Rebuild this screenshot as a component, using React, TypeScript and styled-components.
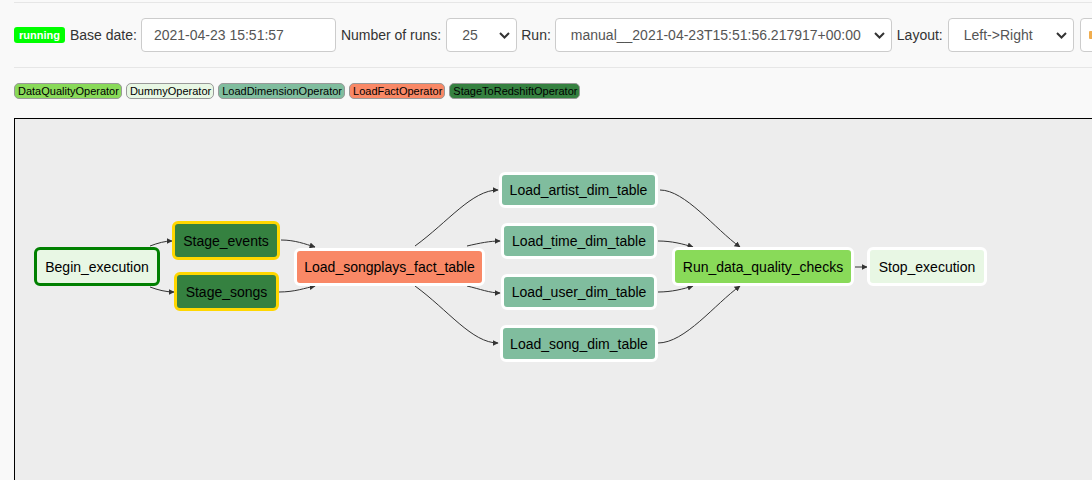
import React from "react";
import styled, { createGlobalStyle } from "styled-components";

const GlobalStyle = createGlobalStyle`
  html, body {
    margin: 0;
    padding: 0;
    background: #f9f9f9;
    overflow: hidden;
    font-family: "Liberation Sans", Arial, sans-serif;
    color: #333;
  }
`;

const Page = styled.div`
  padding: 2px 0 0 14px;
  width: 1200px;
`;

const Toolbar = styled.div`
  display: flex;
  align-items: center;
  gap: 4px;
  height: 64px;
  border-top: 1px solid #e6e6e6;
  border-bottom: 1px solid #e6e6e6;
  white-space: nowrap;
`;

const StateBadge = styled.span`
  display: inline-flex;
  align-items: center;
  height: 16px;
  padding: 0 5px;
  margin-right: 1px;
  border-radius: 3px;
  background: #00ff00;
  color: #fff;
  font-size: 11px;
  font-weight: bold;
`;

const Label = styled.span<{ $ml?: number }>`
  font-size: 14px;
  color: #333;
  margin-left: ${(p) => p.$ml ?? 0}px;
`;

const Field = styled.div<{ $w: number; $pl?: number; $ml?: number }>`
  box-sizing: border-box;
  display: flex;
  align-items: center;
  justify-content: space-between;
  width: ${(p) => p.$w}px;
  height: 34px;
  margin-left: ${(p) => p.$ml ?? 0}px;
  padding: 0 6px 0 ${(p) => p.$pl ?? 15}px;
  background: #fff;
  border: 1px solid #ccc;
  border-radius: 4px;
  font-size: 14px;
  color: #555;
  flex-shrink: 0;
`;

const OrangeMark = styled.span`
  display: inline-block;
  width: 5px;
  height: 8px;
  background: #f0ad4e;
  border-radius: 1px;
`;

const Chevron = () => (
  <svg width="11" height="7" viewBox="0 0 11 7">
    <polyline
      points="1,1 5.5,5.5 10,1"
      fill="none"
      stroke="#333"
      strokeWidth="2"
    />
  </svg>
);

const Legend = styled.div`
  display: flex;
  gap: 4px;
  margin-top: 15px;
`;

const Pill = styled.span<{ $bg: string; $fg?: string }>`
  box-sizing: border-box;
  display: inline-flex;
  align-items: center;
  height: 16px;
  padding: 0 2px 0 3px;
  border: 1px solid #999;
  border-radius: 5px;
  background: ${(p) => p.$bg};
  color: ${(p) => p.$fg ?? "#000"};
  font-size: 11px;
`;

const Canvas = styled.div`
  position: relative;
  margin-top: 19px;
  width: 1100px;
  height: 400px;
  border: 1px solid #000;
  background: #ededed;
`;

const Edges = styled.svg`
  position: absolute;
  left: 0;
  top: 0;
  width: 100%;
  height: 100%;
`;

const Node = styled.div<{
  $x: number;
  $y: number;
  $w: number;
  $h: number;
  $bg: string;
  $border: string;
}>`
  position: absolute;
  box-sizing: border-box;
  left: ${(p) => p.$x}px;
  top: ${(p) => p.$y}px;
  width: ${(p) => p.$w}px;
  height: ${(p) => p.$h}px;
  display: flex;
  align-items: center;
  justify-content: center;
  background: ${(p) => p.$bg};
  border: 3px solid ${(p) => p.$border};
  border-radius: 6px;
  font-size: 14px;
  color: #000;
  white-space: nowrap;
`;

const COLORS = {
  dq: "#89da59",
  dummy: "#e8f7e4",
  dim: "#80bd9e",
  fact: "#f98866",
  stage: "#358140",
};

const OX = 15;
const OY = 119;

const nodes = [
  { id: "Begin_execution", x: 34, y: 247, w: 126, h: 39, bg: COLORS.dummy, border: "#008000" },
  { id: "Stage_events", x: 172, y: 221, w: 108, h: 39, bg: COLORS.stage, border: "#ffd700" },
  { id: "Stage_songs", x: 174, y: 272, w: 105, h: 39, bg: COLORS.stage, border: "#ffd700" },
  { id: "Load_songplays_fact_table", x: 294, y: 248, w: 191, h: 38, bg: COLORS.fact, border: "#fff" },
  { id: "Load_artist_dim_table", x: 499, y: 172, w: 159, h: 36, bg: COLORS.dim, border: "#fff" },
  { id: "Load_time_dim_table", x: 501, y: 223, w: 156, h: 36, bg: COLORS.dim, border: "#fff" },
  { id: "Load_user_dim_table", x: 501, y: 274, w: 156, h: 36, bg: COLORS.dim, border: "#fff" },
  { id: "Load_song_dim_table", x: 500, y: 325, w: 158, h: 37, bg: COLORS.dim, border: "#fff" },
  { id: "Run_data_quality_checks", x: 672, y: 247, w: 182, h: 39, bg: COLORS.dq, border: "#fff" },
  { id: "Stop_execution", x: 867, y: 247, w: 120, h: 39, bg: COLORS.dummy, border: "#fff" },
];

type P = [number, number];
const edges: [P, P, P, P][] = [
  [[150, 246], [158, 243], [165, 241], [172, 241]],
  [[150, 287], [158, 290], [166, 292], [174, 292]],
  [[281, 240], [295, 240], [305, 244], [315, 247]],
  [[279, 292], [295, 292], [305, 288], [315, 286]],
  [[415, 246], [448, 222], [472, 190], [498, 190]],
  [[467, 246], [480, 243], [490, 241], [500, 241]],
  [[467, 286], [480, 289], [490, 293], [500, 293]],
  [[415, 286], [448, 310], [472, 343], [498, 343]],
  [[660, 190], [685, 190], [715, 229], [740, 247]],
  [[658, 241], [672, 241], [683, 244], [693, 247]],
  [[658, 292], [672, 292], [683, 289], [693, 286]],
  [[658, 343], [685, 343], [715, 304], [740, 286]],
  [[855, 267], [859, 267], [863, 267], [867, 267]],
];

const pt = (p: P) => `${p[0] - OX},${p[1] - OY}`;

export default function App() {
  return (
    <>
      <GlobalStyle />
      <Page>
        <Toolbar>
          <StateBadge>running</StateBadge>
          <Label>Base date:</Label>
          <Field $w={195} $pl={12}>2021-04-23 15:51:57</Field>
          <Label $ml={1}>Number of runs:</Label>
          <Field $w={71} $ml={1}>
            25
            <Chevron />
          </Field>
          <Label>Run:</Label>
          <Field $w={337}>
            manual__2021-04-23T15:51:56.217917+00:00
            <Chevron />
          </Field>
          <Label $ml={1}>Layout:</Label>
          <Field $w={126} $ml={1}>
            Left-&gt;Right
            <Chevron />
          </Field>
          <Field $w={80} $pl={8} $ml={2}>
            <OrangeMark />
          </Field>
        </Toolbar>
        <Legend>
          <Pill $bg={COLORS.dq}>DataQualityOperator</Pill>
          <Pill $bg={COLORS.dummy}>DummyOperator</Pill>
          <Pill $bg={COLORS.dim}>LoadDimensionOperator</Pill>
          <Pill $bg={COLORS.fact}>LoadFactOperator</Pill>
          <Pill $bg={COLORS.stage}>StageToRedshiftOperator</Pill>
        </Legend>
        <Canvas>
          <Edges>
            <defs>
              <marker
                id="arrow"
                viewBox="0 0 10 10"
                refX="9"
                refY="5"
                markerUnits="userSpaceOnUse"
                markerWidth="6"
                markerHeight="6"
                orient="auto"
              >
                <path d="M0,0 L10,5 L0,10 z" fill="#333" />
              </marker>
            </defs>
            {edges.map((e, i) => (
              <path
                key={i}
                d={`M${pt(e[0])} C${pt(e[1])} ${pt(e[2])} ${pt(e[3])}`}
                fill="none"
                stroke="#333"
                strokeWidth="1"
                markerEnd="url(#arrow)"
              />
            ))}
          </Edges>
          {nodes.map((n) => (
            <Node
              key={n.id}
              $x={n.x - OX}
              $y={n.y - OY}
              $w={n.w}
              $h={n.h}
              $bg={n.bg}
              $border={n.border}
            >
              {n.id}
            </Node>
          ))}
        </Canvas>
      </Page>
    </>
  );
}
